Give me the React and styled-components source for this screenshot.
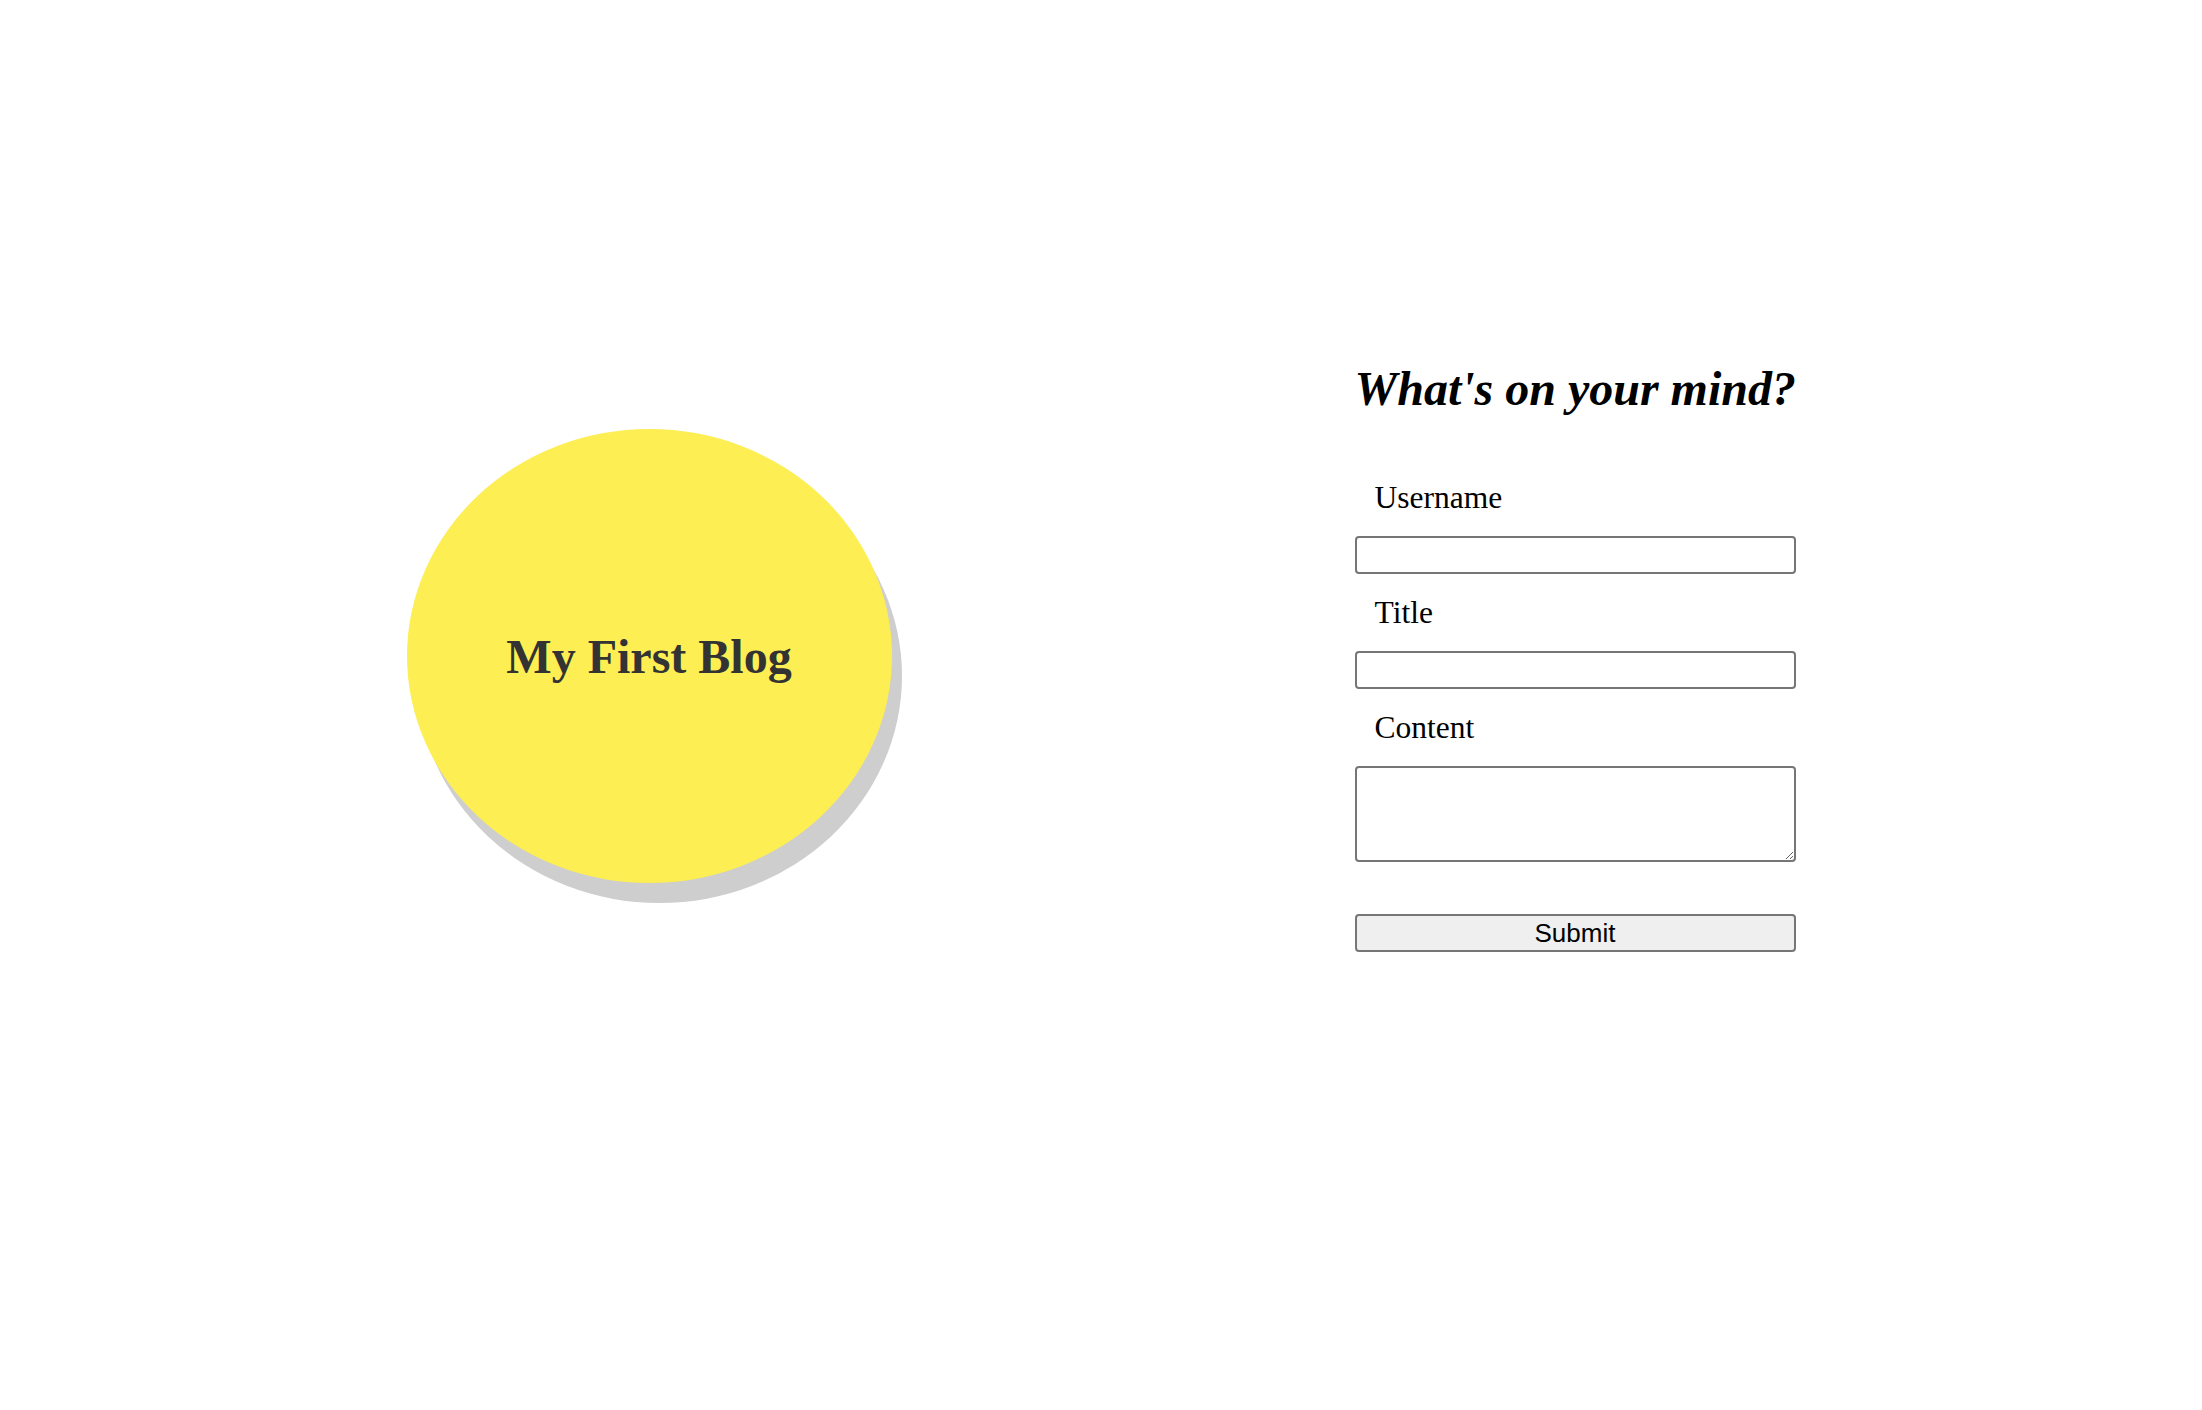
import React from "react";
import styled, { createGlobalStyle } from "styled-components";

const GlobalStyle = createGlobalStyle`
  body {
    margin: 0;
    background: #fff;
    font-family: "Liberation Serif", "Times New Roman", serif;
  }
`;

const Page = styled.main`
  display: flex;
  justify-content: center;
  align-items: center;
  gap: 463px;
  height: 1312px;
`;

const Badge = styled.div`
  display: flex;
  align-items: center;
  justify-content: center;
  width: 485px;
  height: 454px;
  border-radius: 50%;
  background-color: #fcee53;
  box-shadow: 10px 20px #cecece;
  flex-shrink: 0;

  h1 {
    margin: 0;
    font-size: 48px;
    font-weight: bold;
    color: #333;
  }
`;

const PostForm = styled.form`
  display: flex;
  flex-direction: column;
  width: 441px;
  flex-shrink: 0;
`;

const Heading = styled.h2`
  margin: 0 0 43px;
  font-size: 48px;
  font-style: italic;
  font-weight: bold;
  white-space: nowrap;
  color: #000;
`;

const Label = styled.label`
  display: block;
  margin: 21px 0 20px;
  padding: 0 20px;
  font-size: 31.5px;
  color: #000;
`;

const Field = styled.input`
  box-sizing: border-box;
  width: 100%;
  height: ${(p) => p.$h || 38}px;
  margin: 0;
  padding: 2px 6px;
  border: 2px solid #767676;
  border-radius: 4px;
  background: #fff;
  font-family: "Liberation Sans", Arial, sans-serif;
  font-size: 24px;
`;

const Content = styled(Field).attrs({ as: "textarea" })`
  resize: both;
`;

const SubmitButton = styled.button`
  box-sizing: border-box;
  width: 100%;
  height: 38px;
  margin-top: 52px;
  padding: 0 12px;
  border: 2px solid #767676;
  border-radius: 4px;
  background-color: #efefef;
  color: #000;
  font-family: "Liberation Sans", Arial, sans-serif;
  font-size: 26px;
  line-height: 1;
`;

const App = () => {
  return (
    <>
      <GlobalStyle />
      <Page>
        <Badge>
          <h1>My First Blog</h1>
        </Badge>

        <PostForm onSubmit={(e) => e.preventDefault()}>
          <Heading>What's on your mind?</Heading>

          <Label htmlFor="username">Username</Label>
          <Field id="username" type="text" />

          <Label htmlFor="title">Title</Label>
          <Field id="title" type="text" />

          <Label htmlFor="content">Content</Label>
          <Content id="content" $h={96} />

          <SubmitButton type="submit">Submit</SubmitButton>
        </PostForm>
      </Page>
    </>
  );
};

export default App;
